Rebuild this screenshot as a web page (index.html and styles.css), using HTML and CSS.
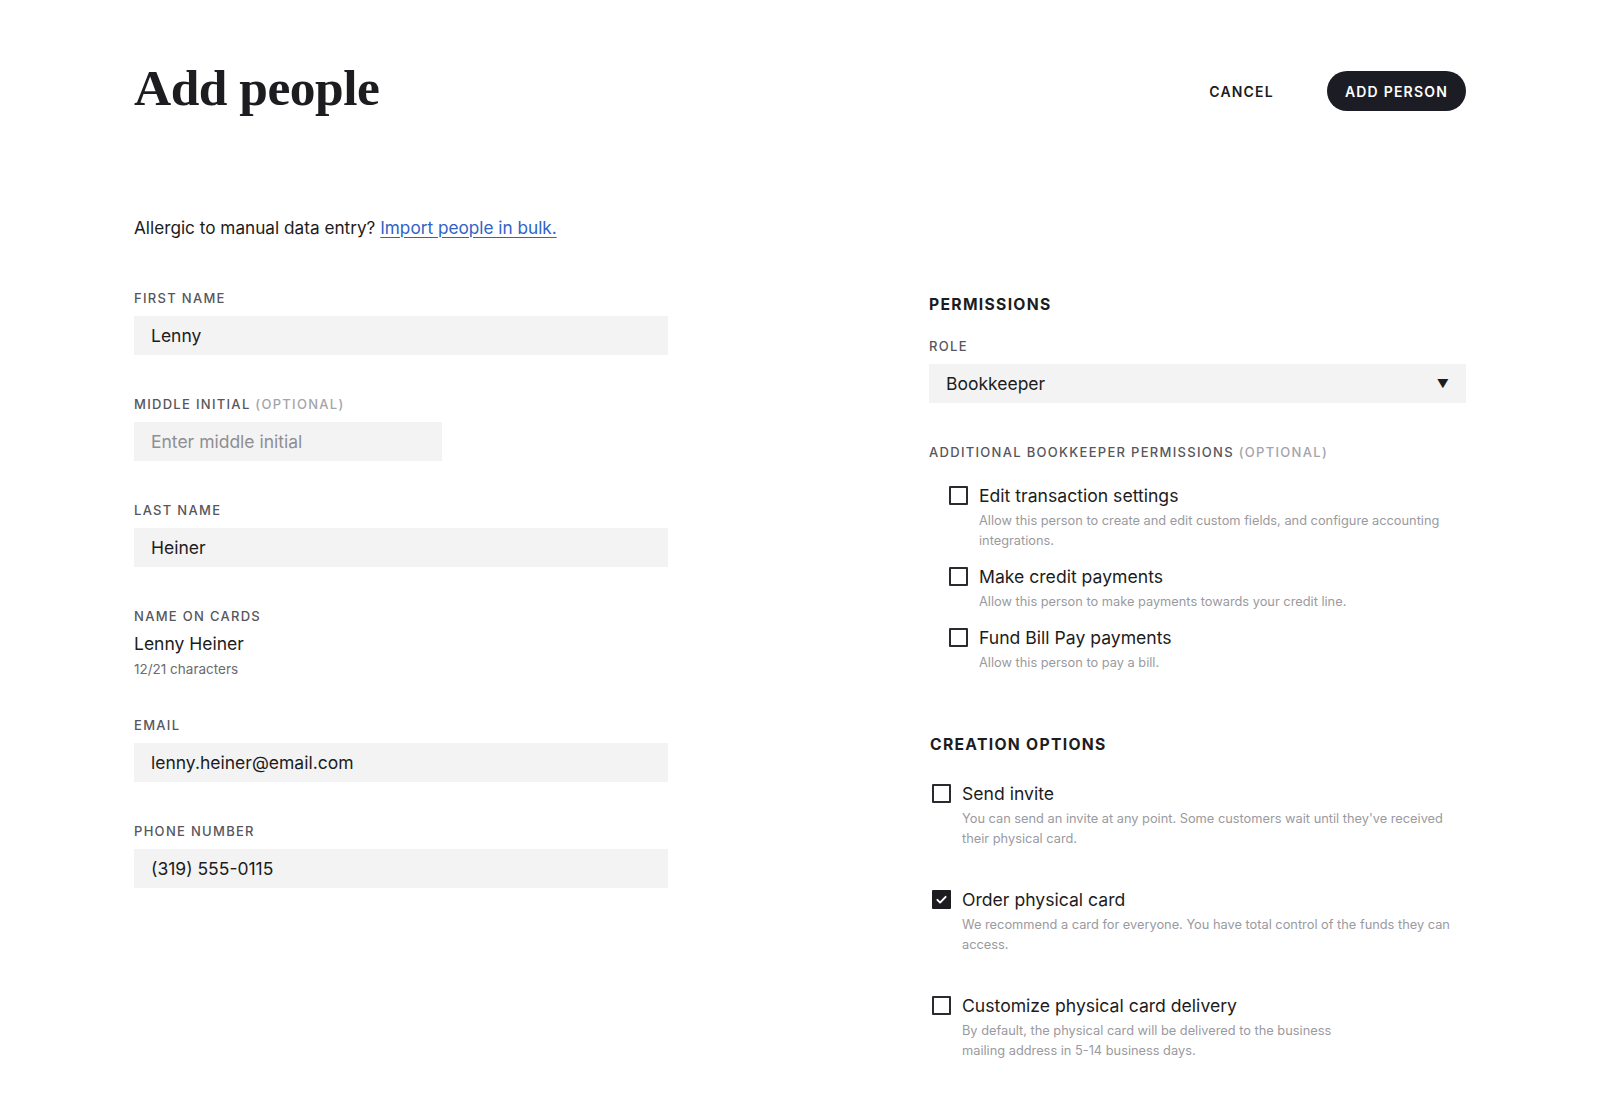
FILE: index.html
```html
<!DOCTYPE html>
<html lang="en">
<head>
<meta charset="utf-8">
<title>Add people</title>
<link rel="stylesheet" href="styles.css">
</head>
<body>
<div class="page">
  <header class="header">
    <h1 class="title">Add people</h1>
    <div class="actions">
      <button class="btn-cancel">CANCEL</button>
      <button class="btn-primary">ADD PERSON</button>
    </div>
  </header>

  <p class="intro">Allergic to manual data entry? <a href="#" class="link">Import people in bulk.</a></p>

  <div class="columns">
    <div class="col-left">
      <div class="field">
        <div class="label">FIRST NAME</div>
        <div class="input">Lenny</div>
      </div>
      <div class="field">
        <div class="label">MIDDLE INITIAL <span class="opt">(OPTIONAL)</span></div>
        <div class="input input-short placeholder">Enter middle initial</div>
      </div>
      <div class="field">
        <div class="label">LAST NAME</div>
        <div class="input">Heiner</div>
      </div>
      <div class="field">
        <div class="label">NAME ON CARDS</div>
        <div class="static">Lenny Heiner</div>
        <div class="count">12/21 characters</div>
      </div>
      <div class="field">
        <div class="label">EMAIL</div>
        <div class="input">lenny.heiner@email.com</div>
      </div>
      <div class="field">
        <div class="label">PHONE NUMBER</div>
        <div class="input">(319) 555-0115</div>
      </div>
    </div>

    <div class="col-right">
      <h2 class="section">PERMISSIONS</h2>
      <div class="label">ROLE</div>
      <div class="input select"><span>Bookkeeper</span><span class="arrow">&#9660;</span></div>

      <div class="label add-label">ADDITIONAL BOOKKEEPER PERMISSIONS <span class="opt">(OPTIONAL)</span></div>
      <div class="checks">
        <div class="check">
          <span class="box"></span>
          <div class="check-body">
            <div class="check-title">Edit transaction settings</div>
            <div class="check-desc">Allow this person to create and edit custom fields, and configure accounting integrations.</div>
          </div>
        </div>
        <div class="check">
          <span class="box"></span>
          <div class="check-body">
            <div class="check-title">Make credit payments</div>
            <div class="check-desc">Allow this person to make payments towards your credit line.</div>
          </div>
        </div>
        <div class="check">
          <span class="box"></span>
          <div class="check-body">
            <div class="check-title">Fund Bill Pay payments</div>
            <div class="check-desc">Allow this person to pay a bill.</div>
          </div>
        </div>
      </div>

      <h2 class="section section-2">CREATION OPTIONS</h2>
      <div class="options">
        <div class="check">
          <span class="box"></span>
          <div class="check-body">
            <div class="check-title">Send invite</div>
            <div class="check-desc">You can send an invite at any point. Some customers wait until they've received their physical card.</div>
          </div>
        </div>
        <div class="check">
          <span class="box checked"><svg viewBox="0 0 20 20" width="20" height="20"><path d="M4.5 10.5l3.6 3.6L15.5 6.5" fill="none" stroke="#fff" stroke-width="2.6" stroke-linecap="round" stroke-linejoin="round"/></svg></span>
          <div class="check-body">
            <div class="check-title">Order physical card</div>
            <div class="check-desc">We recommend a card for everyone. You have total control of the funds they can access.</div>
          </div>
        </div>
        <div class="check">
          <span class="box"></span>
          <div class="check-body">
            <div class="check-title">Customize physical card delivery</div>
            <div class="check-desc narrow">By default, the physical card will be delivered to the business mailing address in 5-14 business days.</div>
          </div>
        </div>
      </div>
    </div>
  </div>
</div>
</body>
</html>
```

FILE: styles.css
```css
* { box-sizing: border-box; }
html, body { margin: 0; padding: 0; background: #fff; }
body {
  font-family: Inter, "Noto Sans", "Liberation Sans", sans-serif;
  color: #1c1c21;
}
.page {
  padding: 0 134px 0 134px;
}
.header {
  display: flex;
  justify-content: space-between;
  height: 190px;
}
.title {
  font-family: "Liberation Serif", "DejaVu Serif", serif;
  font-weight: 700;
  font-size: 51.5px;
  letter-spacing: -0.5px;
  line-height: 60px;
  margin: 0;
  color: #1c1c21;
  padding-top: 58px;
}
.actions {
  display: flex;
  align-items: center;
  gap: 53px;
  align-self: flex-start;
  padding-top: 71px;
}
button {
  font-family: inherit;
  cursor: pointer;
  border: none;
}
.btn-cancel {
  background: none;
  font-size: 14px;
  font-weight: 600;
  letter-spacing: 1.2px;
  color: #1c1c21;
  padding: 0;
}
.btn-primary {
  background: #1c1d24;
  color: #fff;
  font-size: 14px;
  font-weight: 600;
  letter-spacing: 1.2px;
  height: 40px;
  padding: 0 18px;
  border-radius: 20px;
}
.intro {
  margin: 26px 0 0;
  font-size: 17.2px;
  line-height: 24px;
}
.link {
  color: #2f63c7;
  text-decoration: underline;
  text-underline-offset: 3px;
  text-decoration-thickness: 1px;
}
.columns {
  display: flex;
  justify-content: space-between;
  margin-top: 50px;
}
.col-left {
  width: 534px;
  display: flex;
  flex-direction: column;
  gap: 41px;
}
.col-right {
  width: 537px;
  padding-top: 6px;
}
.label {
  font-size: 13px;
  font-weight: 500;
  letter-spacing: 1.3px;
  color: #56565c;
  line-height: 16px;
  margin-bottom: 10px;
}
.opt { color: #a4a4aa; }
.input {
  height: 39px;
  background: #f3f3f4;
  font-size: 17.5px;
  line-height: 39px;
  padding: 0 17px;
  color: #1c1c21;
}
.input-short { width: 308px; }
.placeholder { color: #8e8e93; }
.static {
  font-size: 17.5px;
  line-height: 22px;
  margin-top: -1px;
}
.count {
  font-size: 13.5px;
  color: #6b6b70;
  line-height: 18px;
  margin-top: 5px;
  margin-bottom: -2px;
}
.section {
  margin: 0 0 24px;
  font-size: 15.7px;
  font-weight: 700;
  letter-spacing: 1.3px;
  line-height: 18px;
}
.select {
  display: flex;
  justify-content: space-between;
  align-items: center;
  padding-right: 17px;
}
.arrow { font-size: 12px; color: #1c1c21; }
.add-label { margin-top: 41px; margin-bottom: 25px; }
.checks {
  display: flex;
  flex-direction: column;
  gap: 15px;
  padding-left: 20px;
}
.check {
  display: flex;
  gap: 11px;
  align-items: flex-start;
}
.box {
  width: 19px;
  height: 19px;
  border: 2px solid #2a2a30;
  border-radius: 1px;
  flex-shrink: 0;
  margin-top: 1px;
  display: flex;
  align-items: center;
  justify-content: center;
}
.box.checked { background: #1c1c21; border-color: #1c1c21; }
.box svg { width: 17px; height: 17px; }
.check-title {
  font-size: 17.6px;
  line-height: 21px;
}
.check-desc {
  font-size: 12.8px;
  color: #9a9aa0;
  line-height: 20px;
  margin-top: 5px;
}
.check-desc.narrow { max-width: 385px; }
.section-2 { margin-top: 63px; margin-bottom: 29px; padding-left: 1px; }
.options {
  display: flex;
  flex-direction: column;
  gap: 40px;
  padding-left: 3px;
}
```
